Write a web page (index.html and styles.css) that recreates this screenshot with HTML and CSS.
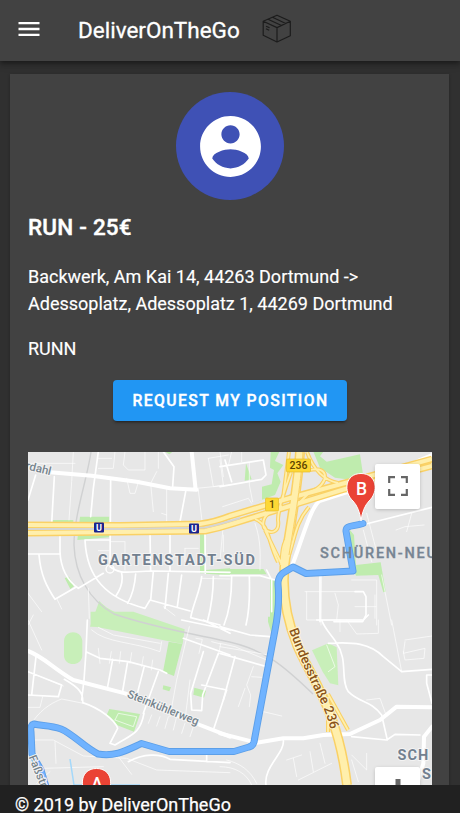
FILE: index.html
```html
<!DOCTYPE html>
<html lang="en">
<head>
<meta charset="utf-8">
<meta name="viewport" content="width=device-width, initial-scale=1">
<title>DeliverOnTheGo</title>
<link rel="stylesheet" href="styles.css">
</head>
<body>
<div class="app">
<header class="toolbar">
  <svg class="menu" viewBox="0 0 24 24"><path d="M3 18h18v-2H3v2zm0-5h18v-2H3v2zm0-7v2h18V6H3z"/></svg>
  <h1 class="brand">DeliverOnTheGo</h1>
  <svg class="box" viewBox="0 0 30 30"><path d="M15 1.200 28.300 7.300V21.700L15 28 1.200 21.300V7.300ZM1.200 7.300 15 13.600 28.300 7.300M15 13.600V28M6 5.200 19.500 11.500M10.500 3.200 23.700 9.500M4 12.200l3.600 1.600M4 14.800l3.200 1.400"/></svg>
</header>
<main class="content">
  <section class="card">
    <div class="avatar"><svg viewBox="0 0 24 24"><path d="M12 2C6.480 2 2 6.480 2 12s4.480 10 10 10 10-4.480 10-10S17.520 2 12 2zm0 3c1.660 0 3 1.340 3 3s-1.340 3-3 3-3-1.340-3-3 1.340-3 3-3zm0 14.200c-2.500 0-4.710-1.280-6-3.220.030-1.990 4-3.080 6-3.080 1.990 0 5.970 1.090 6 3.080-1.290 1.940-3.500 3.220-6 3.220z"/></svg></div>
    <h2 class="title">RUN - 25€</h2>
    <p class="text">Backwerk, Am Kai 14, 44263 Dortmund -&gt;<br>Adessoplatz, Adessoplatz 1, 44269 Dortmund</p>
    <p class="text">RUNN</p>
    <button class="request">REQUEST MY POSITION</button>
    <div class="map">
      <svg class="map-canvas" viewBox="28 452 404 333">
        <defs>
          <path id="bundes" d="M289 630C298 655 309 678 318 697Q328 714 334 745"/>
        </defs>
        <!-- parks -->
        <g class="park">
          <g transform="translate(20 445) scale(.33333)"><path d="M180 215H268V277L172 285ZM98 225H160V236H98ZM540 262H554V385H540ZM555 375 630 370V391L555 386ZM134 399 147 395 162 424 151 432ZM435 20H458L448 28Z"/><path class="pale" d="M238 468C270 505 340 525 425 545H210Z"/></g>
          <g transform="translate(220 445) scale(.33333)"><path d="M152 20H178L165 48 190 60 172 85 182 110 165 150 102 173 126 165V125L155 118 162 75 150 68ZM280 20H310L300 34 320 50 420 28 430 95 380 103 345 98 300 68ZM78 55 95 103 74 107ZM0 372H130L140 388H0ZM150 400 175 415 170 540H150ZM390 255 402 270 408 360 482 352 497 440 490 442 475 390 408 392 390 350Z"/></g>
          <g transform="translate(0 620) scale(.33333)"><path class="pale" d="M272-25H400L554 28 548 72 272 17ZM192 62C195 28 243 28 247 62V108C243 140 195 140 192 108Z"/><path d="M506 65 547 72 522 168 489 155ZM490 196 513 202 508 214 488 208ZM583 203 618 212 612 233 580 224ZM328 267 420 282 402 335 350 315 320 285Z"/></g>
          <g transform="translate(220 620) scale(.33333)"><path class="pale" d="M276 91 325 70 350 82 355 196 330 190 308 155Z"/><path d="M144-10H162L155 42 144 5Z"/></g>
        </g>
        <!-- railway -->
        <path class="rail" d="M91 452C87 480 74 515 74 545C75 575 89 600 114 614C155 628 195 634 220 640C265 648 285 667 313 694"/>
        <!-- local streets -->
        <g class="street">
          <g transform="translate(20 445) scale(.33333)">
            <path class="thin" d="M24 55H165M160 20 155 110 147 225M235 70H280L285 20M235 40H275M315 20 310 60 325 75H375V20M320 100 330 145H345L357 105M410 80 392 115 400 200M415 20V70M440 130V235M425 205 440 210M535 135 550 262M530 130 630 120M565 40 625 30M565 40 580 125 610 120M600 45 610 120M24 445 65 500M110 460 125 492M315 292V375M270 290H315M235 317H268M495 310V350M495 310H535M610 270V320M545 400 630 402M430 485 465 512M205 430 208 520M24 540 40 510"/>
            <path class="mid" d="M235 20 220 130 212 215M272 100 270 360M103 95 95 235M47 90 24 165M430 20 462 65 458 125M497 140 480 230M120 262V320C122 365 140 405 175 430L250 385M24 327H120M57 330C62 390 80 425 105 463L170 425M195 285C200 400 260 460 375 490L390 465 510 498M195 285H270M270 365C300 390 320 380 400 378L630 382M390 262 392 378M450 262V378M400 380 392 465M305 385C310 410 300 435 288 452M347 387C345 415 337 450 323 475M445 385 435 490M485 390 472 485M545 395C540 440 520 475 512 518L600 540M580 395C580 450 570 500 562 530M555 262 556 385"/>
            <circle cx="270" cy="372" r="12"/>
            <path class="wide" d="M90 82 215 92 350 110 450 130 530 134M515 20 527 134"/>
          </g>
          <g transform="translate(220 445) scale(.33333)">
            <path class="thin" d="M0 20 10 95M35 20 25 62M8 185 85 160 95 175M88 55V120L98 170M65 20V50M105 235C125 290 120 340 120 375M0 345 10 240M430 255 455 350M440 205 470 320M560 260 575 205M528 255 555 245 612 240M255 440H430M260 440V525H425M345 445 355 480 350 525M405 485H468M395 405H470V540M465 450V520M485 390 515 540M305 375 303 540"/>
            <path class="mid" d="M0 65 130 45 138 90 125 103 0 125M15 45 35 110M0 392H120L165 405M35 395C35 450 30 495 12 540M88 395C90 460 88 500 78 540M300 375V530M405 440H430L438 455V510L428 530H342M438 237 636 187M140 375 155 405V500"/>
            <path class="wide" d="M298 168C270 190 245 290 215 365M298 168 480 110 600 45 636 30"/>
          </g>
          <g transform="translate(0 620) scale(.33333)">
            <path class="thin" d="M84 155 190 198M84 0 125 90M84 262H120L128 230M100 302C130 260 165 245 185 237L250 250M275 30C320 70 400 65 480 95L485 65M295 22 340 45 480 70M295 85 300 130M334 95 328 130M362 95 358 130M395 98 390 130M430 110 425 140M458 120 454 150M568 20 530 180 510 290M588 55 607 58 597 100M635 65 662 72 655 105M570 180 555 300M345 300 355 280 410 290 400 320 345 300M100 360H160L250 408 380 415 470 450 690 458M165 365 168 430M130 445 310 440M355 410 395 463M110 490 150 455M455 285 445 310M480 290 470 318M505 290 495 325M530 290 520 330M555 310 545 340M580 320 570 350"/>
            <path class="mid" d="M262 0 258 95 252 180 245 240M258 95 300 115 385 125 480 150 500 160M338 118 322 205M383 125 368 213M432 142 412 220M475 155 430 280M84 155 185 195 175 230 84 225M108 110 95 225M193 178C240 205 250 220 248 248C300 265 345 300 353 325L330 370 345 375C390 345 420 345 432 280M550 55 690 105M610 95 572 220 575 270 605 272 608 225 655 100M605 195 680 210M680 210 640 330M545 0 690 30M610 0 690 40M385 425C430 400 480 400 510 418L690 428M620 395V425"/>
            <path class="wide" d="M84 93C130 110 160 145 220 180L375 220 600 315 690 350"/>
          </g>
          <g transform="translate(220 620) scale(.33333)">
            <path class="thin" d="M0 70 45 80 140 120M100 140 80 195 92 225 88 260M95 170 125 172M75 205 55 260M0 205 20 210M0 80 60 90 145 105M130 275 185 288M200 420 245 405M220 415 230 470M325 155 345 140 320 75M360 0V35M380 0 410 42 475 40V0M515 0 545 155M555 65 550 100 615 85 612 115 555 120 550 95M555 60 636 48M395 405 440 450V400M395 420 415 485M235 480 335 430M300 370 315 430M270 395 280 455M0 440C45 440 80 460 95 495M20 420C60 430 90 450 110 490M440 240 480 235 500 290"/>
            <path class="mid" d="M0 20 90 45 150 50M0 100 140 140M45 110 10 240M305 0C315 30 340 50 350 70C385 120 360 180 385 215C420 250 450 240 485 285L502 360M325 70C400 65 450 70 490 110L545 155 636 148M636 165 620 165V190L636 250M190 360C195 400 130 440 138 495M395 350 500 360 525 343 600 345M290 0H430L445-15"/>
            <path class="wide" d="M0 340 110 368 190 355 250 355 310 345 390 342 480 300 530 260 636 262M636 320 612 350 610 430 595 480"/>
          </g>
        </g>
        <!-- motorways -->
        <g class="hw-case">
          <path d="M28 525 120 525.500 200 524Q215 522 230 516L290 498 345 483 432 459"/>
          <path d="M28 533 120 532 205 531Q220 528 235 523L290 506 345 489 432 466"/>
          <path class="main" d="M300 452C298 485 290 530 286 555C280 590 287 620 297 645C312 680 338 710 347 785"/>
          <path class="ramp" d="M289 452 283 498M307 452C313 468 322 480 338 483M310 470C330 465 330 485 310 492L295 507M291 472C283 495 278 510 278 520C280 533 270 535 264 528C260 516 272 510 282 506M255 519C270 525 267 540 278 562M265 530 282 565M309 507C293 525 295 545 285 565M292 530C280 545 283 555 281 565M328 694 348 730M328 697V732"/>
        </g>
        <g class="hw">
          <path d="M28 525 120 525.500 200 524Q215 522 230 516L290 498 345 483 432 459"/>
          <path d="M28 533 120 532 205 531Q220 528 235 523L290 506 345 489 432 466"/>
          <path class="ramp" d="M289 452 283 498M307 452C313 468 322 480 338 483M310 470C330 465 330 485 310 492L295 507M291 472C283 495 278 510 278 520C280 533 270 535 264 528C260 516 272 510 282 506M255 519C270 525 267 540 278 562M265 530 282 565M309 507C293 525 295 545 285 565M292 530C280 545 283 555 281 565M328 694 348 730M328 697V732"/>
          <path class="main" d="M300 452C298 485 290 530 286 555C280 590 287 620 297 645C312 680 338 710 347 785"/>
        </g>
        <path class="median" d="M28 529 120 529 205 527.500Q218 525 240 518"/>
        <path class="lane" d="M303 452C301 485 293 530 289 555"/>
        <path class="water" d="M70 759 74 785H140"/>
        <!-- route -->
        <path class="route-edge" d="M363 523.500C351 527 346 525 346 531L353 571 306 573.500 293 567 283 573Q278 577 278 584C280 605 277 620 275 630L254 742Q253 746 249 747L234 751.500H169L141.500 743.500C127 750 116 757 98 754C84 747 73 734 61 729C50 725 42 726 34 724Q30 725 31 732L32 754 41 770 47 790"/>
        <path class="route" d="M363 523.500C351 527 346 525 346 531L353 571 306 573.500 293 567 283 573Q278 577 278 584C280 605 277 620 275 630L254 742Q253 746 249 747L234 751.500H169L141.500 743.500C127 750 116 757 98 754C84 747 73 734 61 729C50 725 42 726 34 724Q30 725 31 732L32 754 41 770 47 790"/>
        <!-- district labels -->
        <g class="label">
          <text x="98" y="564.500" textLength="158">GARTENSTADT-SÜD</text>
          <text class="plain" x="320" y="557.500" textLength="117">SCHÜREN-NEU</text>
          <text x="397.500" y="760">SCH</text>
          <text x="422" y="778.500">S</text>
        </g>
        <g class="road-name">
          <text transform="translate(25 469) rotate(14)">rdahl</text>
          <text transform="translate(126.500 697) rotate(22)" textLength="76">Steinkühlerweg</text>
          <text transform="translate(28.500 757) rotate(68)">Faßstraße</text>
          <text class="brown"><textPath href="#bundes">Bundesstraße 236</textPath></text>
        </g>
        <!-- shields and stations -->
        <g class="shield"><rect x="286.500" y="459" width="24" height="13" rx="1"/><text x="298.500" y="469.300">236</text><rect x="265.500" y="498" width="13" height="13" rx="1"/><text x="272" y="508.300">1</text></g>
        <g class="station"><rect x="94" y="522.500" width="10" height="10" rx="1"/><text x="99" y="530.800">U</text><rect x="189" y="523.500" width="10" height="10" rx="1"/><text x="194" y="531.800">U</text></g>
        <!-- waypoints -->
        <g class="pin">
          <path d="M361 521Q359.500 508 353 501C343 492 345 473.500 361 473.500S379 492 369 501Q362.500 508 361 521Z"/><text x="361.500" y="495">B</text>
          <path d="M96.500 816Q95 803 88.500 796C78.500 787 80.500 768.500 96.500 768.500S114.500 787 104.500 796Q98 803 96.500 816Z"/><text x="97" y="789.500">A</text>
        </g>
      </svg>
      <div class="control fullscreen"><svg viewBox="0 0 20 20"><path d="M1.200 7V1.200H7M13 1.200H18.800V7M18.800 13V18.800H13M7 18.800H1.200V13"/></svg></div>
      <div class="control zoom-in"><svg viewBox="0 0 20 20"><path class="plus" d="M10 0V20M0 10H20"/></svg></div>
    </div>
  </section>
</main>
<footer class="footer">© 2019 by DeliverOnTheGo</footer>
</div>
</body>
</html>
```

FILE: styles.css
```css
* { box-sizing: border-box; }
body { margin: 0; background: #303030; color: #fff; font-family: Roboto, "Liberation Sans", sans-serif; }
.app { height: 813px; display: flex; flex-direction: column; overflow: hidden; }
.toolbar { flex: 0 0 61px; display: flex; align-items: center; padding: 0 15px; background: #424242; position: relative; box-shadow: 0 2px 5px rgba(0,0,0,.4), 0 4px 8px rgba(0,0,0,.14); }
.menu { width: 28px; height: 28px; fill: #fff; margin-top: -3px; }
.brand { margin: -2px 0 0 35px; font-size: 22.5px; font-weight: 400; line-height: 34px; width: 162px; white-space: nowrap; -webkit-text-stroke: .3px #fff; }
.box { width: 30px; height: 30px; margin: -4px 0 0 22px; fill: none; stroke: #1c1c1c; stroke-width: 1.2; stroke-linejoin: round; }
.content { flex: 1; min-height: 0; overflow: hidden; padding: 13px 11px 0 10px; }
.card { background: #424242; padding: 18px 17px 0 18px; height: 750px; box-shadow: 0 1px 3px rgba(0,0,0,.25); }
.avatar { width: 108px; height: 108px; margin: 0 auto; border-radius: 50%; background: #3f51b5; display: grid; place-items: center; }
.avatar svg { width: 73px; height: 73px; fill: #fff; }
.title { margin: 9px 0 18px; font-size: 22.5px; line-height: 36px; font-weight: 500; letter-spacing: .2px; -webkit-text-stroke: .4px #fff; }
.text { margin: 0 0 18px; font-size: 18px; line-height: 27px; -webkit-text-stroke: .15px #fff; }
.request { display: block; width: 234px; height: 41px; margin: 0 auto 31px; padding: 0 0 0 1px; border: 0; border-radius: 4px; background: #2196f3; color: #fff; font: 500 15.75px/42px Roboto, sans-serif; letter-spacing: 1.41px; -webkit-text-stroke: .35px #fff; box-shadow: 0 3px 2px -2px rgba(0,0,0,.3), 0 2px 3px rgba(0,0,0,.2); }
.map { position: relative; height: 350px; overflow: hidden; background: #e7e7e7; }
.map-canvas { display: block; width: 404px; height: 333px; }
.park { fill: #bfecae; }
.pale { fill: #c8efb9; }
.rail { fill: none; stroke: #d0d1d2; stroke-width: 1.4; }
.street { fill: none; stroke: #fff; stroke-linejoin: round; stroke-linecap: round; }
.thin { stroke-width: 3; opacity: .65; }
.mid { stroke-width: 5; }
.wide { stroke-width: 12; }
.street circle { stroke-width: 4; }
.hw-case, .hw { fill: none; stroke-linejoin: round; }
.hw-case { stroke: #fad165; stroke-width: 7; }
.hw { stroke: #ffefac; stroke-width: 4; }
.hw-case .main { stroke-width: 10; }
.hw .main { stroke-width: 7; }
.hw-case .ramp { stroke-width: 4; }
.hw .ramp { stroke-width: 1.8; }
.median { fill: none; stroke: #d5d5d3; stroke-width: 2; }
.lane { fill: none; stroke: #fad165; stroke-width: 1; }
.water { fill: none; stroke: #a4d8fa; stroke-width: 1.5; }
.route-edge, .route { fill: none; stroke-linejoin: round; stroke-linecap: round; }
.route-edge { stroke: #5c9fe8; stroke-width: 7; }
.route { stroke: #70b3ff; stroke-width: 5.2; }
.label { fill: #72808f; stroke: #f4f4f4; stroke-width: 2px; paint-order: stroke; font-weight: 500; font-size: 14.5px; letter-spacing: 1px; }
.plain { stroke: #72808f; stroke-width: .3px; opacity: .95; }
.label text:not(.plain) { font-weight: 700; }
.road-name { fill: #75838c; stroke: #f4f4f4; stroke-width: 2px; paint-order: stroke; font-weight: 500; font-size: 11.5px; }
.brown { fill: #8a5418; stroke: #fff3c8; font-size: 13.2px; }
.shield rect { fill: #fdd835; stroke: #e5bc2c; stroke-width: .7; }
.shield text { fill: #5c4300; font-size: 10.5px; font-weight: 500; text-anchor: middle; }
.station rect { fill: #1a238f; }
.station text { fill: #fff; font-size: 9px; font-weight: 700; text-anchor: middle; }
.pin path { fill: #ea4335; stroke: #fff; stroke-width: 1; }
.pin text { fill: #fff; font-size: 17.5px; font-weight: 500; text-anchor: middle; }
.control { position: absolute; right: 12px; width: 45px; height: 45px; background: #fff; border-radius: 2px; display: grid; place-items: center; box-shadow: 0 1px 4px -1px rgba(0,0,0,.3); }
.fullscreen { top: 12px; }
.zoom-in { top: 315px; }
.control svg { width: 20px; height: 20px; margin-top: -1px; fill: none; stroke: #666; stroke-width: 2.2; }
.control .plus { stroke-width: 5; }
.footer { flex: 0 0 28px; min-height: 0; height: 28px; overflow: hidden; position: relative; background: #212121; padding-left: 15px; font-size: 18px; line-height: 40px; white-space: nowrap; -webkit-text-stroke: .25px #fff; }
```
